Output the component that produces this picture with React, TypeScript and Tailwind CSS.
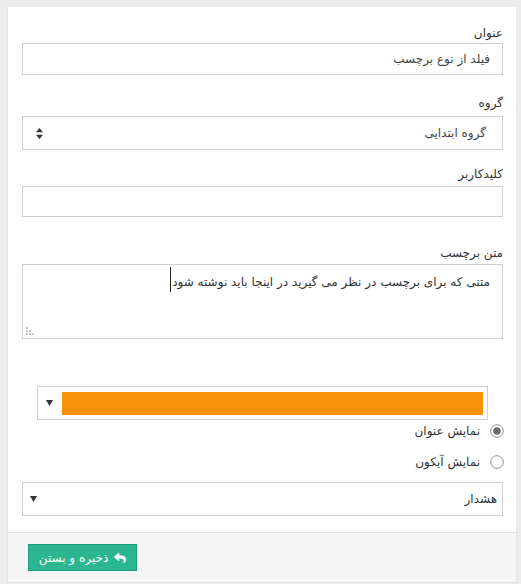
import { FaReply } from "react-icons/fa";

const font = { fontFamily: '"DejaVu Sans", Tahoma, sans-serif' };

const Caret = () => (
  <svg width="7" height="6" viewBox="0 0 7 6" className="shrink-0">
    <path d="M0 0h7L3.5 6z" fill="#333" />
  </svg>
);

const Label = ({ children }: { children: string }) => (
  <div className="h-4 text-[12px] leading-4 text-[#333]">{children}</div>
);

const Radio = ({ checked, label }: { checked: boolean; label: string }) => (
  <div className="flex h-5 items-center gap-[10px] -mr-px">
    <svg width="14" height="14" viewBox="0 0 14 14" className="shrink-0">
      <circle cx="7" cy="7" r="6.3" fill="#fff" stroke="#8f8f8f" strokeWidth="1" />
      {checked && <circle cx="7" cy="7" r="3.8" fill="#6b6b6b" />}
    </svg>
    <span className="text-[12px] text-[#333]">{label}</span>
  </div>
);

export default function App() {
  return (
    <div style={font} className="h-[584px] w-[521px] bg-[#ececec] pt-[7px] pl-[7px]">
      <div dir="rtl" className="w-[510px] border-l border-r border-[#e4e4e4] bg-white">
        <div className="pt-[18px] pr-[13px] pl-[14px] pb-4">
          <Label>عنوان</Label>
          <div className="mt-[2px] flex h-8 items-center border border-[#cfcfcf] pr-3 text-[12px] text-[#444]">
            فیلد از نوع برچسب
          </div>

          <div className="mt-5">
            <Label>گروه</Label>
          </div>
          <div className="mt-[5px] flex h-[34px] items-center justify-between border border-[#cfcfcf] pr-4 pl-[13px] text-[12px] text-[#444]">
            <span>گروه ابتدایی</span>
            <svg width="7" height="11" viewBox="0 0 7 11">
              <path d="M0 4.3h7L3.5 0zM0 6.7h7L3.5 11z" fill="#333" />
            </svg>
          </div>

          <div className="mt-4">
            <Label>کلیدکاربر</Label>
          </div>
          <div className="mt-1 h-[31px] border border-[#cfcfcf]" />

          <div className="mt-[28px]">
            <Label>متن برچسب</Label>
          </div>
          <div className="relative mt-[3px] h-[75px] border border-[#cfcfcf] pr-3 pt-[2px] text-[12px] text-[#333]">
            <span className="inline-flex items-start">
              <span className="pt-[8px] leading-[14px]">
                متنی که برای برچسب در نظر می گیرید در اینجا باید نوشته شود
              </span>
              <span className="mr-px inline-block h-[25px] w-px bg-[#222]" />
            </span>
            <svg width="8" height="8" viewBox="0 0 8 8" className="absolute bottom-[3px] left-[3px]">
              <g fill="#c4c4c4">
                <rect x="0" y="0" width="2" height="2" />
                <rect x="0" y="3" width="2" height="2" />
                <rect x="3" y="3" width="2" height="2" />
                <rect x="0" y="6" width="2" height="2" />
                <rect x="3" y="6" width="2" height="2" />
                <rect x="6" y="6" width="2" height="2" />
              </g>
            </svg>
          </div>

          <div className="mx-[15px] mt-[47px] flex h-[34px] items-center gap-[9px] border border-[#cfcfcf] pr-[4px] pl-[8px]">
            <div className="h-[23px] flex-1 bg-[#f7910a]" />
            <Caret />
          </div>

          <div className="mt-px">
            <Radio checked label="نمایش عنوان" />
          </div>
          <div className="mt-[11px]">
            <Radio checked={false} label="نمایش آیکون" />
          </div>

          <div className="mt-[10px] flex h-[34px] items-center justify-between border border-[#cfcfcf] pr-[5px] pl-[7px] text-[12px] text-[#333]">
            <span>هشدار</span>
            <Caret />
          </div>
        </div>

        <div className="flex h-[51px] items-center justify-end border-t border-b border-[#e2e2e2] bg-[#f5f5f5] pl-5">
          <button className="flex h-[27px] w-[109px] items-center justify-center gap-[6px] border border-[#1f9e80] bg-[#2cb591] text-[12px] text-white">
            <FaReply className="h-[12px] w-[12px]" />
            <span>ذخیره و بستن</span>
          </button>
        </div>
      </div>
    </div>
  );
}
